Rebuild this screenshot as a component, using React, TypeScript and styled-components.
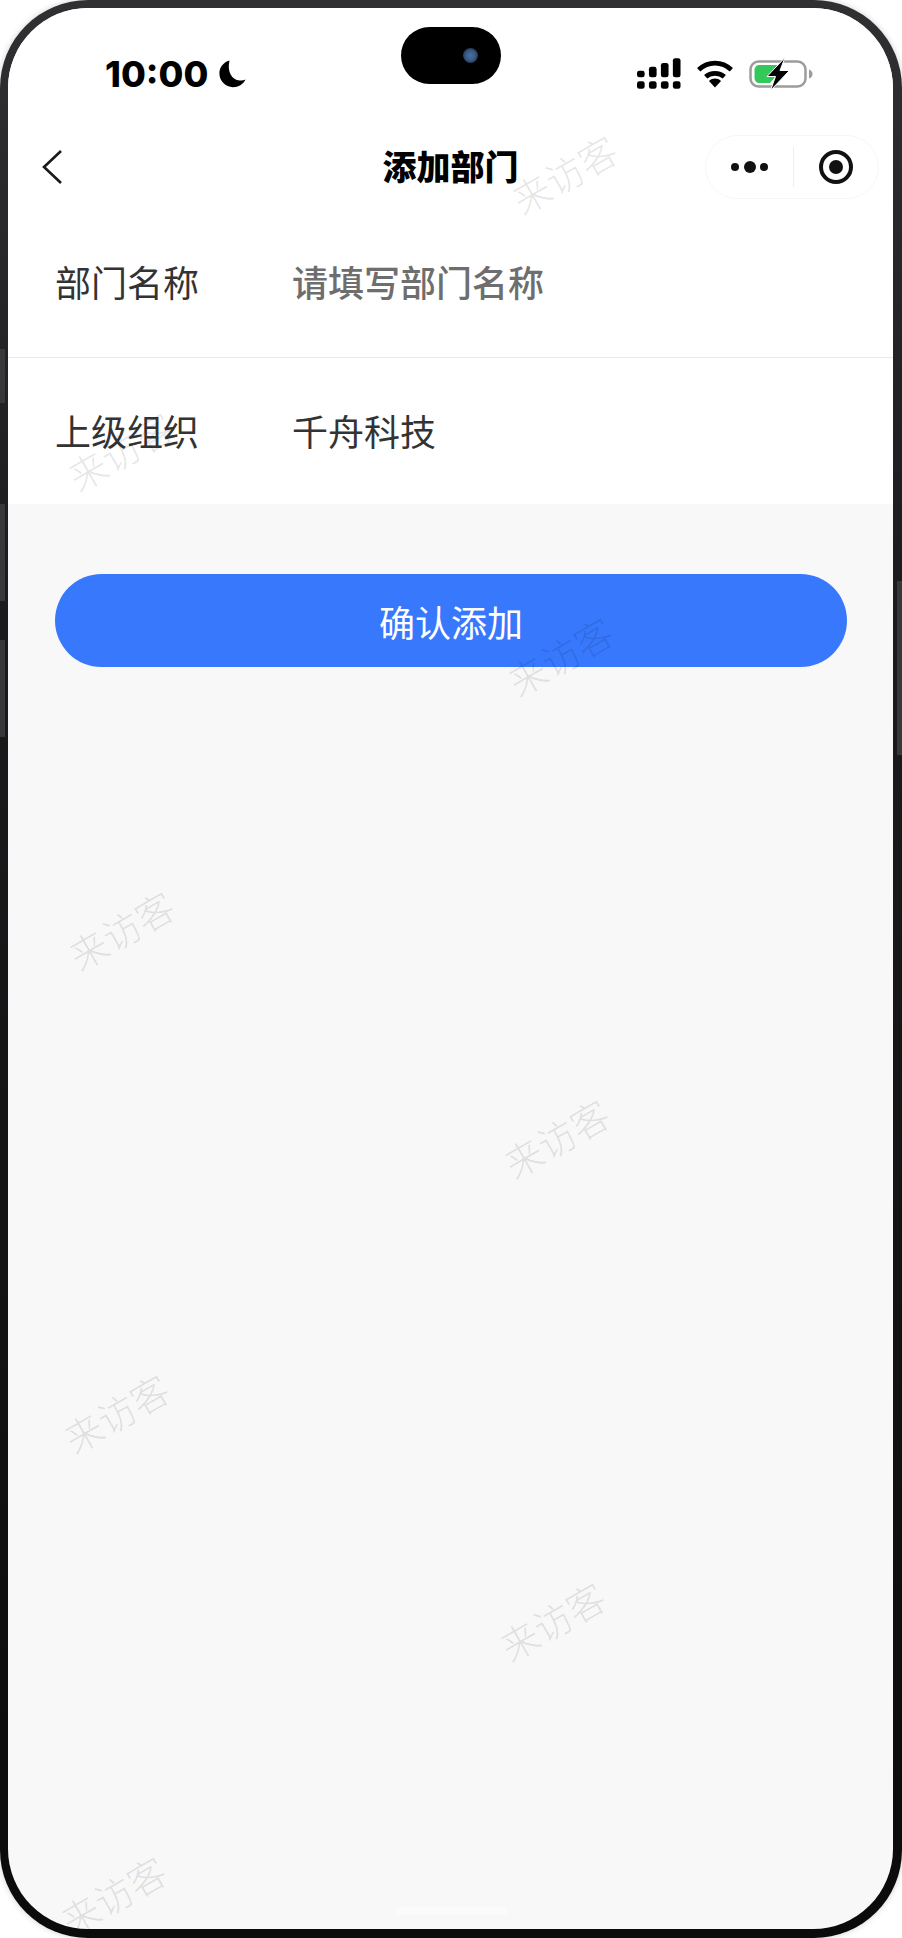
import React from 'react';
import styled, { createGlobalStyle } from 'styled-components';

const cjk = `'Noto Sans CJK SC', 'Noto Sans', sans-serif`;

const GlobalStyle = createGlobalStyle`
  html, body {
    margin: 0;
    padding: 0;
    background: #fff;
  }
  * {
    box-sizing: border-box;
  }
`;

const marks = [
  { x: 564, y: 174 },
  { x: 120, y: 451 },
  { x: 560, y: 656 },
  { x: 121, y: 930 },
  { x: 556, y: 1138 },
  { x: 116, y: 1413 },
  { x: 552, y: 1621 },
  { x: 113, y: 1895 },
];

const sideKeys = [
  { side: 'left', y: 349, h: 54 },
  { side: 'left', y: 504, h: 97 },
  { side: 'left', y: 640, h: 97 },
  { side: 'right', y: 581, h: 174 },
];

const MoonIcon = () => (
  <svg width="29" height="28" viewBox="2 1 27 28">
    <path
      d="M12.5 1.500C6.600 3 2.400 8.300 2.400 14.600 2.400 22.100 8.500 28.200 16 28.200 21.500 28.200 26 25.300 28.600 20.500 26.800 21.400 24.700 21.800 22.600 21.500 15 20.700 9.800 13.200 12.500 1.500Z"
      fill="#000"
    />
  </svg>
);

const SignalIcon = () => (
  <svg width="44" height="31" viewBox="0 0 46 32">
    <rect x="0" y="13" width="8" height="7" rx="2.500" />
    <rect x="0" y="24" width="8" height="8" rx="2.500" />
    <rect x="12.500" y="9" width="8" height="11" rx="2.500" />
    <rect x="12.500" y="24" width="8" height="8" rx="2.500" />
    <rect x="25" y="5" width="8" height="15" rx="2.500" />
    <rect x="25" y="24" width="8" height="8" rx="2.500" />
    <rect x="37.500" y="0" width="8" height="20" rx="2.500" />
    <rect x="37.500" y="24" width="8" height="8" rx="2.500" />
  </svg>
);

const WifiIcon = () => (
  <svg width="38" height="28" viewBox="0 0 40 30" fill="none" stroke="#000" strokeWidth="5">
    <path d="M2.500 10.500C12.500 1 27.500 1 37.500 10.500" />
    <path d="M10 18C15.500 13 24.500 13 30 18" />
    <path d="M13.500 22.500L20 29.500 26.500 22.500C23 19 17 19 13.500 22.500Z" fill="#000" stroke="none" />
  </svg>
);

const BatteryIcon = () => (
  <svg width="64" height="34" viewBox="0 0 64 34">
    <rect x="1.500" y="4.500" width="55" height="25" rx="8" fill="none" stroke="#9c9c9c" strokeWidth="2.500" />
    <path d="M60 12.500C62.500 13.500 63.500 15 63.500 17S62.500 20.500 60 21.500Z" fill="#9c9c9c" />
    <path d="M11 8H29L23 19H27L21 26H11C7.500 26 5.500 24 5.500 20.500V13.500C5.500 10 7.500 8 11 8Z" fill="#34c759" />
    <path d="M36 0.500L18 19.500H26.500L21.500 33.500 40.500 13.500H31Z" fill="#000" stroke="#fff" strokeWidth="1" />
  </svg>
);

const BackIcon = () => (
  <svg width="22" height="36" viewBox="0 0 22 36" fill="none" stroke="#1a1a1a" strokeWidth="2.600">
    <path d="M20 2L3 18 20 34" />
  </svg>
);

const App = () => (
  <>
    <GlobalStyle />
    <Screen>
      {sideKeys.map(({ side, y, h }) => (
        <SideKey key={y} $side={side} $y={y} $h={h} />
      ))}
      <Frame>
        <Display>
          <Island>
            <Lens />
          </Island>
          <StatusBar>
            <Clock>
              <Time>10:00</Time>
              <MoonIcon />
            </Clock>
            <StatusIcons>
              <SignalIcon />
              <WifiIcon />
              <BatteryIcon />
            </StatusIcons>
          </StatusBar>
          <NavBar>
            <BackIcon />
            <Title>添加部门</Title>
            <Capsule>
              <MoreDots>
                <Dot $size={8} />
                <Dot $size={12} />
                <Dot $size={8} />
              </MoreDots>
              <CapsuleLine />
              <RecordButton>
                <RecordCore />
              </RecordButton>
            </Capsule>
          </NavBar>
          <Form>
            <FormRow $height={136} $lift={17} $divider>
              <Label>部门名称</Label>
              <Placeholder>请填写部门名称</Placeholder>
            </FormRow>
            <FormRow $height={146} $lift={3}>
              <Label>上级组织</Label>
              <Value>千舟科技</Value>
            </FormRow>
          </Form>
          <Actions>
            <SubmitButton>确认添加</SubmitButton>
          </Actions>
          <HomeBar />
          {marks.map(({ x, y }) => (
            <Watermark key={y} $x={x - 8} $y={y - 8}>
              来访客
            </Watermark>
          ))}
        </Display>
      </Frame>
    </Screen>
  </>
);

export default App;

const Screen = styled.div`
  position: relative;
  width: 902px;
  height: 1938px;
  overflow: hidden;
  background: #fff;
`;

const SideKey = styled.div<{ $side: string; $y: number; $h: number }>`
  position: absolute;
  z-index: 2;
  top: ${({ $y }) => $y}px;
  ${({ $side }) => $side}: 0;
  width: 5px;
  height: ${({ $h }) => $h}px;
  background: #38383a;
`;

const Frame = styled.div`
  width: 902px;
  height: 1938px;
  padding: 8px 9px 9px 8px;
  border-radius: 88px;
  background: linear-gradient(180deg, #303032 0%, #1c1c1e 30%, #0b0b0b 100%);
  box-shadow: 0 0 6px rgba(0, 0, 0, 0.18);
`;

const Display = styled.div`
  position: relative;
  display: flex;
  flex-direction: column;
  height: 100%;
  overflow: hidden;
  border-radius: 80px;
  background: #f8f8f8;
`;

const Island = styled.div`
  position: absolute;
  top: 19px;
  left: 393px;
  display: flex;
  align-items: center;
  justify-content: flex-end;
  width: 100px;
  height: 57px;
  padding-right: 23px;
  border-radius: 29px;
  background: #000;
`;

const Lens = styled.div`
  width: 15px;
  height: 15px;
  border-radius: 50%;
  background: radial-gradient(circle, #4a6f9f 0%, #3a5a88 45%, #10141c 100%);
`;

const StatusBar = styled.div`
  display: flex;
  align-items: center;
  justify-content: space-between;
  height: 104px;
  padding: 27px 80px 0 97px;
  background: #fff;
`;

const Clock = styled.div`
  display: flex;
  align-items: center;
  gap: 10px;
`;

const Time = styled.span`
  font-family: Inter, 'Noto Sans', sans-serif;
  font-size: 36px;
  font-weight: 800;
  line-height: 40px;
  color: #000;
`;

const StatusIcons = styled.div`
  display: flex;
  align-items: center;
  gap: 15px;
`;

const NavBar = styled.div`
  position: relative;
  display: flex;
  align-items: center;
  justify-content: space-between;
  height: 110px;
  padding: 0 14px 0 33px;
  background: #fff;
`;

const Title = styled.div`
  position: absolute;
  left: 0;
  right: 0;
  padding-bottom: 4px;
  text-align: center;
  font-family: ${cjk};
  font-size: 34px;
  font-weight: 900;
  color: #000;
`;

const Capsule = styled.div`
  display: flex;
  align-items: center;
  width: 174px;
  height: 64px;
  border: 1px solid #f6f6f6;
  border-radius: 32px;
  background: #fff;
`;

const MoreDots = styled.div`
  display: flex;
  align-items: center;
  justify-content: center;
  gap: 4.5px;
  width: 87px;
`;

const Dot = styled.span<{ $size: number }>`
  width: ${({ $size }) => $size}px;
  height: ${({ $size }) => $size}px;
  border-radius: 50%;
  background: #111;
`;

const CapsuleLine = styled.div`
  width: 1px;
  height: 40px;
  background: #eeeeee;
`;

const RecordButton = styled.div`
  display: flex;
  align-items: center;
  justify-content: center;
  width: 34px;
  height: 34px;
  margin-left: 25px;
  border: 4px solid #111;
  border-radius: 50%;
`;

const RecordCore = styled.div`
  width: 14px;
  height: 14px;
  border-radius: 50%;
  background: #111;
`;

const Form = styled.div`
  display: flex;
  flex-direction: column;
  background: #fff;
`;

const FormRow = styled.div<{ $height: number; $lift: number; $divider?: boolean }>`
  display: flex;
  align-items: center;
  height: ${({ $height }) => $height}px;
  padding: 0 0 ${({ $lift }) => $lift}px 47px;
  font-family: ${cjk};
  font-size: 36px;
  border-bottom: ${({ $divider }) => ($divider ? '1.5px solid #e9e9e9' : 'none')};
`;

const Label = styled.div`
  width: 237px;
  color: #333;
`;

const Placeholder = styled.div`
  font-weight: 500;
  color: #6e6e6e;
`;

const Value = styled.div`
  color: #333;
`;

const Actions = styled.div`
  padding: 70px 46px 0 47px;
`;

const SubmitButton = styled.button`
  display: block;
  width: 100%;
  height: 93px;
  border: none;
  border-radius: 47px;
  background: #3878fd;
  font-family: ${cjk};
  font-size: 36px;
  color: #fff;
`;

const HomeBar = styled.div`
  position: absolute;
  bottom: 14px;
  left: 387px;
  width: 112px;
  height: 8px;
  border-radius: 4px;
  background: #fbfbfb;
`;

const Watermark = styled.div<{ $x: number; $y: number }>`
  position: absolute;
  left: ${({ $x }) => $x}px;
  top: ${({ $y }) => $y}px;
  transform: translate(-50%, -50%) rotate(-30deg);
  font-family: ${cjk};
  font-size: 38px;
  font-weight: 300;
  line-height: 1;
  white-space: nowrap;
  color: rgba(0, 0, 0, 0.11);
  pointer-events: none;
`;
